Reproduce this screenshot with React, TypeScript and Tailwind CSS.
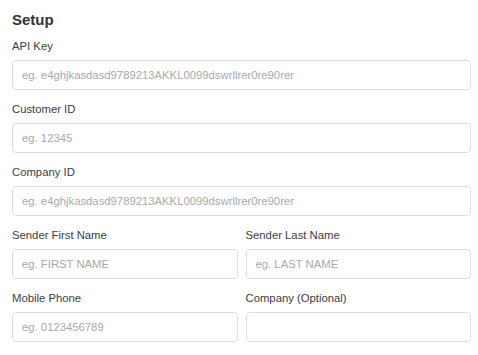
import React from "react";

function Field({ label, placeholder }: { label: string; placeholder?: string }) {
  return (
    <div className="flex flex-col">
      <label className="text-[11.3px] leading-[16px] text-[#3d3d3d] mb-[6px]">{label}</label>
      <input
        className="h-[30px] w-full rounded-[4px] border border-[#dedede] bg-white px-[9px] text-[11.3px] text-[#333] placeholder:text-[#a9a9a9] outline-none"
        placeholder={placeholder}
      />
    </div>
  );
}

export default function App() {
  return (
    <div
      className="min-h-screen w-[478px] bg-white pl-[12px] pr-[7px] pt-[10px]"
      style={{ fontFamily: '"Liberation Sans", Arial, sans-serif' }}
    >
      <h2 className="text-[15px] leading-[20px] font-bold text-[#333] mb-[8px]">Setup</h2>
      <div className="flex flex-col gap-[11px]">
        <Field label="API Key" placeholder="eg. e4ghjkasdasd9789213AKKL0099dswrllrer0re90rer" />
        <Field label="Customer ID" placeholder="eg. 12345" />
        <Field label="Company ID" placeholder="eg. e4ghjkasdasd9789213AKKL0099dswrllrer0re90rer" />
        <div className="grid grid-cols-2 gap-x-[8px] gap-y-[11px]">
          <Field label="Sender First Name" placeholder="eg. FIRST NAME" />
          <Field label="Sender Last Name" placeholder="eg. LAST NAME" />
          <Field label="Mobile Phone" placeholder="eg. 0123456789" />
          <Field label="Company (Optional)" />
        </div>
      </div>
    </div>
  );
}
